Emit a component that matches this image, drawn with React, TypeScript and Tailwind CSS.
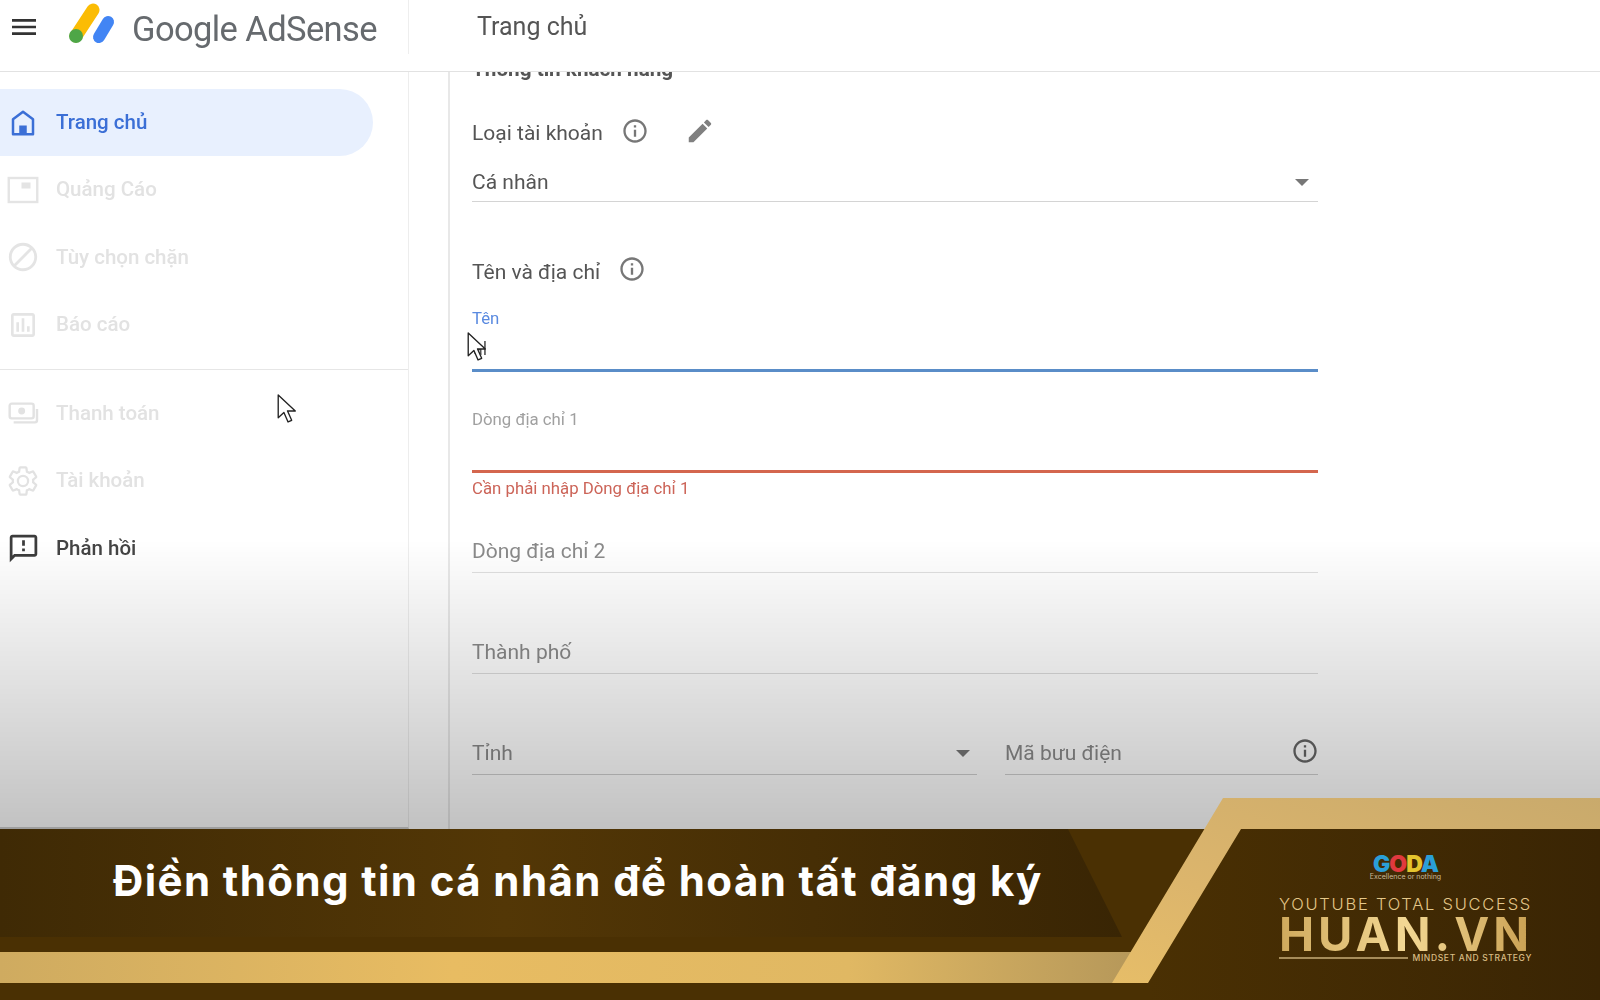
import React from "react";

const P = ({ d, className = "", size = 28 }: { d: string; className?: string; size?: number }) => (
  <svg viewBox="0 0 24 24" width={size} height={size} className={`shrink-0 ${className}`} fill="currentColor"><path d={d} /></svg>
);

const info = "M11 7h2v2h-2zm0 4h2v6h-2zm1-9C6.48 2 2 6.48 2 12s4.48 10 10 10 10-4.48 10-10S17.52 2 12 2zm0 18c-4.41 0-8-3.59-8-8s3.59-8 8-8 8 3.59 8 8-3.59 8-8 8z";
const edit = "M3 17.25V21h3.75L17.81 9.94l-3.75-3.75L3 17.25zM20.71 7.04c.39-.39.39-1.02 0-1.41l-2.34-2.34c-.39-.39-1.02-.39-1.41 0l-1.83 1.83 3.75 3.75 1.83-1.83z";
const block = "M12 2C6.48 2 2 6.48 2 12s4.48 10 10 10 10-4.48 10-10S17.52 2 12 2zM4 12c0-4.42 3.58-8 8-8 1.85 0 3.55.63 4.9 1.69L5.69 16.9C4.63 15.55 4 13.85 4 12zm8 8c-1.85 0-3.55-.63-4.9-1.69L18.31 7.1C19.37 8.45 20 10.15 20 12c0 4.42-3.58 8-8 8z";
const chart = "M19 3H5c-1.1 0-2 .9-2 2v14c0 1.1.9 2 2 2h14c1.1 0 2-.9 2-2V5c0-1.1-.9-2-2-2zm0 16H5V5h14v14zM7 10h2v7H7zm4-3h2v10h-2zm4 6h2v4h-2z";
const feedback = "M20 2H4c-1.1 0-1.99.9-1.99 2L2 22l4-4h14c1.1 0 2-.9 2-2V4c0-1.1-.9-2-2-2zm0 14H5.17L4 17.17V4h16v12zM11 12h2v2h-2zm0-6h2v4h-2z";
const gear = "M19.14 12.94c.04-.3.06-.61.06-.94 0-.32-.02-.64-.07-.94l2.03-1.58c.18-.14.23-.41.12-.61l-1.92-3.32c-.12-.22-.37-.29-.59-.22l-2.39.96c-.5-.38-1.03-.7-1.62-.94l-.36-2.54c-.04-.24-.24-.41-.48-.41h-3.84c-.24 0-.43.17-.47.41l-.36 2.54c-.59.24-1.13.57-1.62.94l-2.39-.96c-.22-.08-.47 0-.59.22L2.74 8.87c-.12.21-.08.47.12.61l2.03 1.58c-.05.3-.09.63-.09.94s.02.64.07.94l-2.03 1.58c-.18.14-.23.41-.12.61l1.92 3.32c.12.22.37.29.59.22l2.39-.96c.5.38 1.03.7 1.62.94l.36 2.54c.05.24.24.41.48.41h3.84c.24 0 .44-.17.47-.41l.36-2.54c.59-.24 1.13-.56 1.62-.94l2.39.96c.22.08.47 0 .59-.22l1.92-3.32c.12-.22.07-.47-.12-.61l-2.01-1.58zM12 15.6c-1.98 0-3.6-1.62-3.6-3.6s1.62-3.6 3.6-3.6 3.6 1.62 3.6 3.6-1.62 3.6-3.6 3.6z";

const HomeIcon = () => (
  <svg viewBox="0 0 24 24" width="30" height="30" fill="none" className="shrink-0 text-[#3b6fd6]">
    <path d="M12 3 4 9V21H20V9Z" stroke="currentColor" strokeWidth="2" strokeLinejoin="round" />
    <rect x="9" y="14" width="6" height="7" fill="currentColor" />
  </svg>
);
const AdIcon = () => (
  <svg viewBox="0 0 24 24" width="36" height="36" fill="none" className="shrink-0 text-[#e4e4e4]">
    <rect x="2.5" y="4" width="19" height="16" stroke="currentColor" strokeWidth="1.6" />
    <rect x="11" y="7" width="6" height="4" fill="currentColor" />
  </svg>
);
const MoneyIcon = () => (
  <svg viewBox="0 0 24 24" width="32" height="32" fill="none" className="shrink-0 text-[#e2e2e2]">
    <rect x="2" y="5" width="18" height="11" rx="1.5" stroke="currentColor" strokeWidth="1.8" />
    <circle cx="11" cy="10.5" r="2.6" fill="currentColor" />
    <path d="M22.5 9v8.5a1.5 1.5 0 0 1-1.5 1.5H5" stroke="currentColor" strokeWidth="1.8" />
  </svg>
);
const GearIcon = () => (
  <svg viewBox="0 0 24 24" width="34" height="34" fill="none" stroke="currentColor" strokeWidth="1.6" className="shrink-0 text-[#e2e2e2]"><path d={gear} /></svg>
);

const Cursor = ({ className }: { className: string }) => (
  <svg viewBox="0 0 18 28" width="19" height="29" className={className}>
    <path d="M1 1V23L6.5 17.8L10.5 27L14 25.4L10 16.4H17.5Z" fill="#fff" stroke="#222" strokeWidth="1.3" strokeLinejoin="round" />
  </svg>
);

const Nav = ({ icon, label, cls }: { icon: React.ReactNode; label: string; cls: string }) => (
  <div className="h-[67.5px] flex items-center">
    <div className="w-[56px] pr-[18px] pl-[8px] flex justify-center shrink-0">{icon}</div>
    <span className={`text-[20.5px] font-medium ${cls}`}>{label}</span>
  </div>
);

const Caret = () => <span className="w-0 h-0 border-x-[7px] border-x-transparent border-t-[7px] border-t-[#777]" />;

export default function App() {
  return (
    <div className="relative w-[1600px] h-[1000px] overflow-hidden bg-white flex flex-col font-['Roboto',sans-serif]">
      <header className="relative z-10 h-[72px] shrink-0 bg-white border-b border-[#e2e2e2] flex blur-[0.4px]">
        <div className="w-[409px] h-[54px] flex items-start border-r border-[#eeeeee] relative">
          <P d="M3 18h18v-2H3v2zm0-5h18v-2H3v2zm0-7v2h18V6H3z" size={32} className="ml-[8px] mt-[11px] text-[#333]" />
          <svg viewBox="0 0 52 44" width="52" height="44" className="ml-[26px] mt-[3px]">
            <line x1="27" y1="7" x2="10" y2="33" stroke="#fbbc04" strokeWidth="13" strokeLinecap="round" />
            <circle cx="10" cy="33" r="7" fill="#4ea647" />
            <line x1="42" y1="19" x2="33" y2="34" stroke="#4285f4" strokeWidth="12" strokeLinecap="round" />
          </svg>
          <span className="ml-[14px] mt-[6px] text-[34.5px] leading-[46px] text-[#666a6e] tracking-[-0.6px]">Google AdSense</span>
        </div>
        <div className="pl-[68px] pt-[9px] text-[25px] leading-[36px] text-[#555]">Trang chủ</div>
      </header>

      <div className="relative flex-1 flex min-h-0 blur-[0.5px]">
        <aside className="w-[409px] shrink-0 border-r border-b-2 border-r-[#ededed] border-b-[#cfcfcf] pt-[17px]">
          <div className="h-[67px] w-[373px] rounded-r-[34px] bg-[#e8f0fe]">
            <Nav icon={<HomeIcon />} label="Trang chủ" cls="text-[#3b6fd6]" />
          </div>
          <Nav icon={<AdIcon />} label="Quảng Cáo" cls="text-[#e2e2e2]" />
          <Nav icon={<P d={block} size={34} className="text-[#e4e4e4]" />} label="Tùy chọn chặn" cls="text-[#e2e2e2]" />
          <Nav icon={<P d={chart} size={32} className="text-[#e4e4e4]" />} label="Báo cáo" cls="text-[#e2e2e2]" />
          <div className="mt-[10px] mb-[10px] border-t border-[#e6e6e6]" />
          <Nav icon={<MoneyIcon />} label="Thanh toán" cls="text-[#e2e2e2]" />
          <Nav icon={<GearIcon />} label="Tài khoản" cls="text-[#e2e2e2]" />
          <Nav icon={<P d={feedback} size={33} className="text-[#3c3c3c]" />} label="Phản hồi" cls="text-[#444]" />
        </aside>

        <main className="ml-[39px] flex-1 border-l-2 border-[#e8e8e8] pl-[22px] overflow-hidden text-[21px] text-[#555]">
          <div className="w-[846px]">
            <div className="-mt-[15px] h-[24px] leading-[24px] font-bold text-[20.7px]">Thông tin khách hàng</div>
            <div className="mt-[36px] h-[32px] flex items-center">
              <span className="pt-[2px]">Loại tài khoản</span>
              <P d={info} size={28} className="ml-[18px] -mt-[4px] text-[#777]" />
              <P d={edit} size={30} className="ml-[36px] -mt-[4px] text-[#808080]" />
            </div>
            <div className="mt-[16px] h-[37px] flex items-center justify-between border-b border-[#d4d4d4]">
              <span>Cá nhân</span>
              <span className="mr-[9px] -mt-[2px] flex"><Caret /></span>
            </div>
            <div className="mt-[53px] h-[32px] flex items-center">
              <span className="pt-[3px]">Tên và địa chỉ</span>
              <P d={info} size={28} className="ml-[18px] -mt-[4px] text-[#777]" />
            </div>
            <div className="mt-[21px] h-[20px] leading-[20px] text-[16.8px] text-[#5a8ae0]">Tên</div>
            <div className="h-[44px] border-b-[3px] border-[#5a8dc8] flex items-center pl-[1px] text-[18px] text-[#555]">al</div>
            <div className="mt-[37px] h-[20px] leading-[20px] text-[16.8px] text-[#a0a0a0]">Dòng địa chỉ 1</div>
            <div className="h-[44px] border-b-[3px] border-[#d4664e]" />
            <div className="mt-[5px] h-[20px] leading-[20px] text-[16.8px] text-[#cc6458]">Cần phải nhập Dòng địa chỉ 1</div>
            <div className="mt-[32px] h-[43px] pt-[2px] flex items-center border-b border-[#e0e0e0] text-[#8a8a8a]">Dòng địa chỉ 2</div>
            <div className="mt-[58px] h-[43px] pt-[2px] flex items-center border-b border-[#dcdcdc] text-[#8a8a8a]">Thành phố</div>
            <div className="mt-[58px] flex gap-[28px] text-[#8a8a8a]">
              <div className="w-[505px] h-[43px] flex items-center justify-between border-b border-[#cfcfcf]">
                <span className="pt-[2px]">Tỉnh</span>
                <span className="mr-[7px] flex"><Caret /></span>
              </div>
              <div className="w-[313px] h-[43px] flex items-center justify-between border-b border-[#cfcfcf]">
                <span className="pt-[2px]">Mã bưu điện</span>
                <P d={info} size={28} className="-mr-[1px] -mt-[4px] text-[#666]" />
              </div>
            </div>
          </div>
        </main>

        <Cursor className="absolute left-[277px] top-[322px]" />
        <Cursor className="absolute left-[467px] top-[260px]" />
        <div className="absolute left-0 right-0 top-[468px] bottom-0 bg-gradient-to-b from-[#00000000] to-[#0000003d]" />
      </div>

      <footer className="relative h-[171px] shrink-0 bg-[#4a3003] flex items-start justify-between">
        <svg viewBox="0 0 1600 202" width="1600" height="202" className="absolute left-0 bottom-0">
          <defs>
            <linearGradient id="title" x1="0" x2="1" y1="0" y2="0">
              <stop offset="0" stopColor="#3f2a05" />
              <stop offset="0.45" stopColor="#533706" />
              <stop offset="1" stopColor="#392504" />
            </linearGradient>
            <linearGradient id="bar" x1="0" x2="1" y1="0" y2="0">
              <stop offset="0" stopColor="#cfab60" />
              <stop offset="0.4" stopColor="#e8bc62" />
              <stop offset="0.75" stopColor="#e0b863" />
              <stop offset="1" stopColor="#b6985a" />
            </linearGradient>
            <linearGradient id="diag" x1="0" x2="1" y1="1" y2="0">
              <stop offset="0" stopColor="#e6bd68" />
              <stop offset="0.35" stopColor="#dcb56c" />
              <stop offset="1" stopColor="#c9aa6c" />
            </linearGradient>
            <linearGradient id="panel" x1="0" x2="1" y1="0" y2="0">
              <stop offset="0" stopColor="#4a3003" />
              <stop offset="1" stopColor="#3a2504" />
            </linearGradient>
          </defs>
          <polygon points="0,31 1068,31 1122,139 0,139" fill="url(#title)" />
          <rect x="0" y="154" width="1132" height="31" fill="url(#bar)" />
          <polygon points="1241,31 1600,31 1600,202 1148,202 1148,185" fill="url(#panel)" />
          <polygon points="1223,0 1600,0 1600,31 1241,31 1148,185 1112,185" fill="url(#diag)" />
        </svg>
        <h1 className="relative ml-[113px] mt-[27px] text-[42px] leading-[50px] tracking-[1.4px] font-bold whitespace-nowrap text-white font-['Inter',sans-serif]">Điền thông tin cá nhân để hoàn tất đăng ký</h1>
        <div className="relative mr-[68px] mt-[26px] w-[253px] flex flex-col items-center">
          <div className="text-[23px] leading-[18px] font-black tracking-[-1px] font-['Inter',sans-serif]">
            <span className="text-[#2a9fd8]">G</span><span className="text-[#e0393e]">O</span><span className="text-[#e4c52e]">D</span><span className="text-[#2a9fd8]">A</span>
          </div>
          <div className="text-[7px] leading-[8px] text-[#c9b99a] font-['Inter',sans-serif]">Excellence or nothing</div>
          <div className="mt-[15px] w-full text-[16.5px] leading-[16px] tracking-[1.75px] whitespace-nowrap text-[#e5c88a] font-['Inter',sans-serif] font-light">YOUTUBE TOTAL SUCCESS</div>
          <div className="mt-[4px] w-full text-[47px] leading-[36px] font-bold tracking-[4px] whitespace-nowrap bg-gradient-to-r from-[#cfa95c] via-[#f3d894] to-[#c9a052] bg-clip-text text-transparent font-['Inter',sans-serif]">HUAN.VN</div>
          <div className="w-full flex items-center gap-[4px] whitespace-nowrap">
            <div className="flex-1 h-[2px] bg-[#a68c5a]" />
            <span className="text-[8.5px] leading-[12px] tracking-[0.65px] text-[#d9bd85] font-['Inter',sans-serif] font-medium">MINDSET AND STRATEGY</span>
          </div>
        </div>
      </footer>
    </div>
  );
}
